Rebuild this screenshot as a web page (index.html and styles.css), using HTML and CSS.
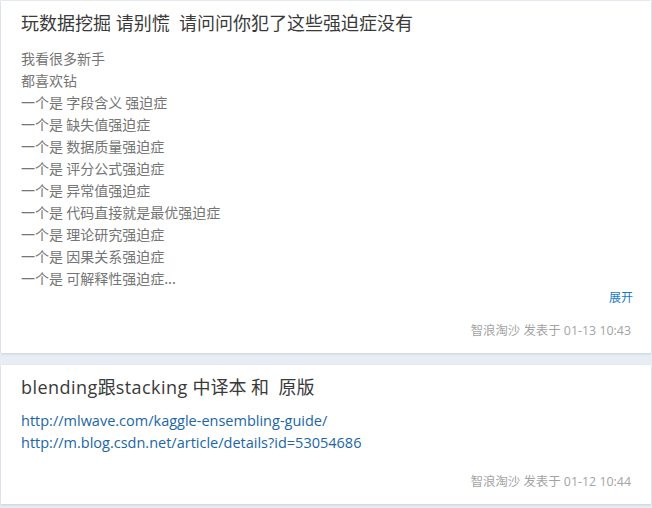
FILE: index.html
```html
<!DOCTYPE html>
<html lang="zh-CN">
<head>
<meta charset="utf-8">
<link rel="stylesheet" href="styles.css">
</head>
<body>
<div class="feed">
  <article class="card">
    <h2 class="title">玩数据挖掘 请别慌&nbsp; 请问问你犯了这些强迫症没有</h2>
    <div class="body">
      <p>我看很多新手</p>
      <p>都喜欢钻</p>
      <p>一个是 字段含义 强迫症</p>
      <p>一个是 缺失值强迫症</p>
      <p>一个是 数据质量强迫症</p>
      <p>一个是 评分公式强迫症</p>
      <p>一个是 异常值强迫症</p>
      <p>一个是 代码直接就是最优强迫症</p>
      <p>一个是 理论研究强迫症</p>
      <p>一个是 因果关系强迫症</p>
      <p>一个是 可解释性强迫症...</p>
    </div>
    <div class="more"><a href="#">展开</a></div>
    <div class="meta">智浪淘沙 发表于 01-13 10:43</div>
  </article>
  <article class="card">
    <h2 class="title"><span class="latin">blending</span>跟<span class="latin">stacking</span> 中译本 和&nbsp; 原版</h2>
    <div class="links">
      <p><a href="#">http://mlwave.com/kaggle-ensembling-guide/</a></p>
      <p><a href="#">http://m.blog.csdn.net/article/details?id=53054686</a></p>
    </div>
    <div class="meta meta-2">智浪淘沙 发表于 01-12 10:44</div>
  </article>
</div>
</body>
</html>
```
FILE: styles.css
```css
html, body {
  margin: 0;
  padding: 0;
  background: #e8edf4;
}
body {
  font-family: "Open Sans", "Noto Sans CJK SC", sans-serif;
  width: 652px;
  height: 508px;
  overflow: hidden;
}
.feed {
  display: flex;
  flex-direction: column;
  gap: 12px;
  padding: 1px 1px 0 1px;
}
.card {
  background: #fff;
  padding: 9px 20px 13px 20px;
  box-shadow: 0 1px 2px rgba(160, 175, 195, 0.45);
}
.title {
  margin: 0;
  font-size: 18px;
  line-height: 26px;
  font-weight: normal;
  color: #3a3a3a;
  font-family: "Open Sans", "Noto Sans CJK SC", sans-serif;
}
.latin {
  letter-spacing: 0.45px;
}
.body {
  margin-top: 11px;
  font-family: "Noto Sans CJK SC", sans-serif;
  font-size: 14px;
  line-height: 22px;
  color: #757575;
}
.body p, .links p {
  margin: 0;
}
.more {
  text-align: right;
  font-size: 12px;
  line-height: 16px;
  font-family: "Noto Sans CJK SC", sans-serif;
  margin-right: -2px;
}
.more a {
  color: #1a7cc4;
  text-decoration: none;
}
.meta {
  margin-top: 17px;
  text-align: right;
  font-size: 12.4px;
  line-height: 18px;
  color: #a3a3a3;
  font-family: "Open Sans", "Noto Sans CJK SC", sans-serif;
}
.links {
  margin-top: 10px;
  font-size: 14.5px;
  line-height: 22px;
  font-family: "Open Sans", sans-serif;
}
.links a {
  color: #2066a6;
  text-decoration: none;
}
.meta-2 {
  margin-top: 19px;
}
```
